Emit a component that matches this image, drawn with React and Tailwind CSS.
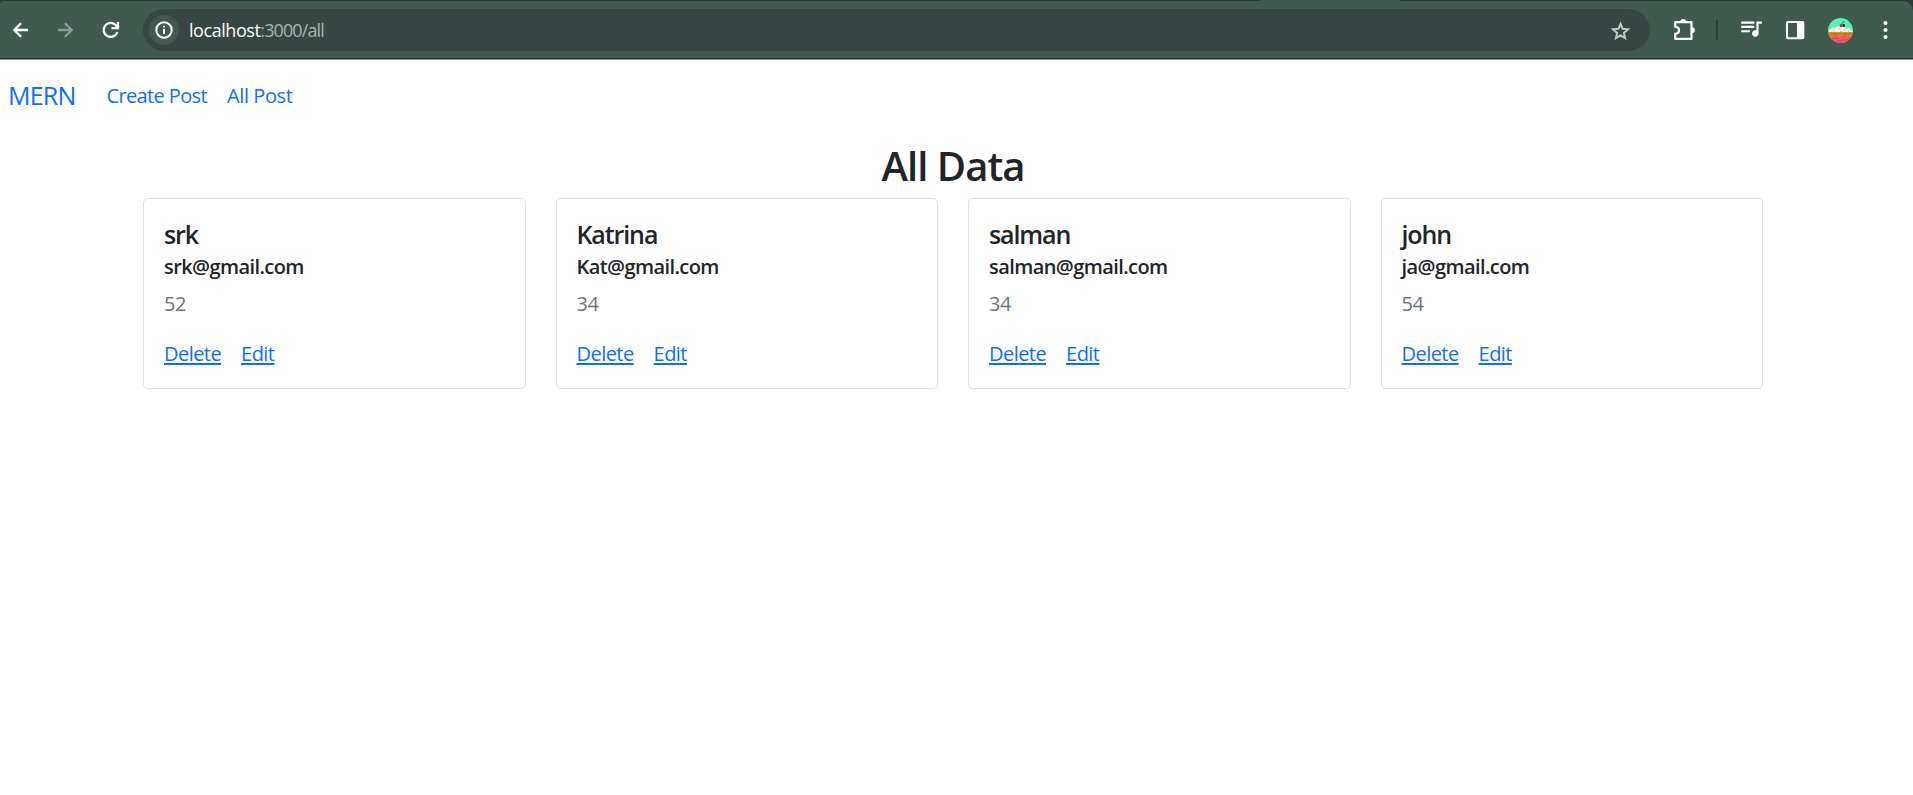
import React from "react";
import { MdQueueMusic } from "react-icons/md";

const people = [
  { name: "srk", email: "srk@gmail.com", age: 52 },
  { name: "Katrina", email: "Kat@gmail.com", age: 34 },
  { name: "salman", email: "salman@gmail.com", age: 34 },
  { name: "john", email: "ja@gmail.com", age: 54 },
];

function Icon({ className = "", children }) {
  return (
    <svg
      viewBox="0 0 28 28"
      className={`size-7 shrink-0 ${className}`}
      fill="none"
      stroke="currentColor"
      strokeWidth="2.3"
    >
      {children}
    </svg>
  );
}

function Avatar() {
  return (
    <svg viewBox="0 0 25 25" className="ml-[19px] size-[25px] shrink-0">
      <defs>
        <clipPath id="avatar-clip">
          <circle cx="12.5" cy="12.5" r="12.5" />
        </clipPath>
      </defs>
      <g clipPath="url(#avatar-clip)">
        <rect width="25" height="25" fill="#52f5b4" />
        <rect y="18" width="25" height="7" fill="#fb4d78" />
        <path d="M4 20.5h7M14 22h7M9 23.3h5" stroke="#d8365f" strokeWidth="0.7" />
        <path
          d="M1 15v-3l2-1 1-2 2 .5 1 1.500 1-2 2-.5 1-1h4l1 1.500 1.500 1 .5 2 1.500-2 2-.5 1 2.500 2 1v3z"
          fill="#f4f4f4"
        />
        <path d="M5 13h2M10 11h2M16 12h2M12 13.500h2M20 13h1" stroke="#b9bcc2" strokeWidth="0.9" />
        <path d="M0 14.600h25v3.200l-3 1.400H3l-3-1.400z" fill="#d9801a" />
        <path d="M0 14.900h25" stroke="#9b5a12" strokeWidth="0.7" />
        <path d="M7 15l1.500 4M17.500 15l-1.500 4" stroke="#9b5a12" strokeWidth="0.7" />
        <path d="M13.500 6l3-3" stroke="#1f5c46" strokeWidth="0.8" />
        <circle cx="13" cy="7.500" r="1.600" fill="#d81e46" />
        <rect x="14.500" y="6" width="2.200" height="3" fill="#3b1620" />
      </g>
    </svg>
  );
}

function BrowserBar() {
  return (
    <header className="flex flex-col bg-[#2b3b35] text-white">
      <div className="flex h-px justify-end pr-[513px]">
        <div className="w-[140px] bg-[#415a50]" />
      </div>
      <div className="flex h-[57px] items-center rounded-tl-sm rounded-tr-[10px] bg-[#415a50] pt-px pl-1.5">
        <Icon>
          <path d="M22 14H8.500M15 7.300L8.300 14l6.700 6.700" />
        </Icon>
        <Icon className="ml-[17px] text-[#8c9b95]">
          <path d="M7 14h13.500M14 7.300l6.700 6.700-6.700 6.700" />
        </Icon>
        <Icon className="ml-[17px]">
          <path d="M21.300 16.200A7 7 0 1 1 20 9.300L22 11.400" />
          <path d="M22 6v6.200h-6.600" />
        </Icon>

        <div className="ml-[19px] flex h-[42px] w-[1507px] items-center rounded-full bg-[#374642] pl-1.5 pr-[17px]">
          <div className="flex size-[30px] items-center justify-center rounded-full bg-[#415a50]">
            <svg viewBox="0 0 18 18" className="size-[18px]" fill="none" stroke="currentColor" strokeWidth="2">
              <circle cx="9" cy="9" r="7.700" />
              <path d="M9 8v5M9 4.600v2" />
            </svg>
          </div>
          <div className="ml-2.5 flex-1 whitespace-nowrap text-[18px] leading-6">
            <span className="tracking-[-0.45px]">localhost</span>
            <span className="tracking-[-0.9px] text-[#a9b3af]">:3000/all</span>
          </div>
          <svg viewBox="0 0 24 24" className="mt-px size-6 text-[#c3c8c6]" fill="none" stroke="currentColor" strokeWidth="2">
            <path d="M11.500 4.800l2.100 5 5.400.5-4.100 3.600 1.200 5.300-4.600-2.800-4.600 2.800 1.200-5.300L4 10.300l5.400-.5z" />
          </svg>
        </div>

        <Icon className="ml-[21px]">
          <path
            d="M4.200 6.200h16.300v16.600H4.200v-5c2.300 0 3.800-1.500 3.800-3.500S6.500 10.800 4.200 10.800z"
            strokeWidth="2.200"
            strokeLinejoin="round"
          />
          <path d="M9.300 6a3 3 0 0 1 6 0zM20.800 11.300a3 3 0 0 1 0 6z" fill="currentColor" stroke="none" />
        </Icon>
        <div className="ml-[17px] h-5 w-0.5 bg-[#2e3f39]" />
        <MdQueueMusic className="mb-1 ml-[20px] size-[26px]" />
        <Icon className="ml-[17px]">
          <rect x="6" y="6" width="16.300" height="16.300" rx="0.800" strokeWidth="2" />
          <path d="M16 6h6v16h-6z" fill="currentColor" stroke="none" />
        </Icon>
        <Avatar />
        <Icon className="ml-[19px]">
          <g fill="currentColor" stroke="none">
            <circle cx="13.500" cy="7" r="2" />
            <circle cx="13.500" cy="14" r="2" />
            <circle cx="13.500" cy="21" r="2" />
          </g>
        </Icon>
      </div>
      <div className="h-px bg-[#22302b]" />
      <div className="h-px bg-[#87958f]" />
    </header>
  );
}

function PersonCard({ name, email, age }) {
  return (
    <article className="rounded-[5px] border border-[#dfdfdf] px-5 pt-5 pb-[19px]">
      <h5 className="text-[25px] leading-[30px] font-semibold tracking-[-1.1px]">{name}</h5>
      <h6 className="mt-1.5 text-[20px] leading-6 font-semibold tracking-[-0.58px]">{email}</h6>
      <p className="mt-2.5 text-[20px] leading-[30px] tracking-[-0.5px] text-[#6c757d]">{age}</p>
      <div className="mt-5 flex gap-5 text-[20px] leading-[30px] tracking-[-0.55px] text-[#0d6efd]">
        <a className="underline decoration-2 underline-offset-2">Delete</a>
        <a className="underline decoration-2 underline-offset-2">Edit</a>
      </div>
    </article>
  );
}

export default function App() {
  return (
    <div className="min-h-screen bg-white font-['Open_Sans','Noto_Sans',sans-serif] text-[#212529]">
      <BrowserBar />
      <nav className="flex h-[70px] items-center pt-0.5 pl-2 text-[#0d6efd]">
        <a className="text-[25px] tracking-[-0.8px]">MERN</a>
        <a className="ml-[31px] text-[20px] tracking-[-0.62px]">Create Post</a>
        <a className="ml-5 text-[20px] tracking-[-0.4px]">All Post</a>
      </nav>
      <main className="ml-[143px] w-[1620px] pt-3">
        <h2 className="text-center text-[40px] leading-[48px] font-semibold tracking-[-0.95px]">All Data</h2>
        <div className="mt-2 grid grid-cols-4 gap-[30px]">
          {people.map((person) => (
            <PersonCard key={person.name} {...person} />
          ))}
        </div>
      </main>
    </div>
  );
}
